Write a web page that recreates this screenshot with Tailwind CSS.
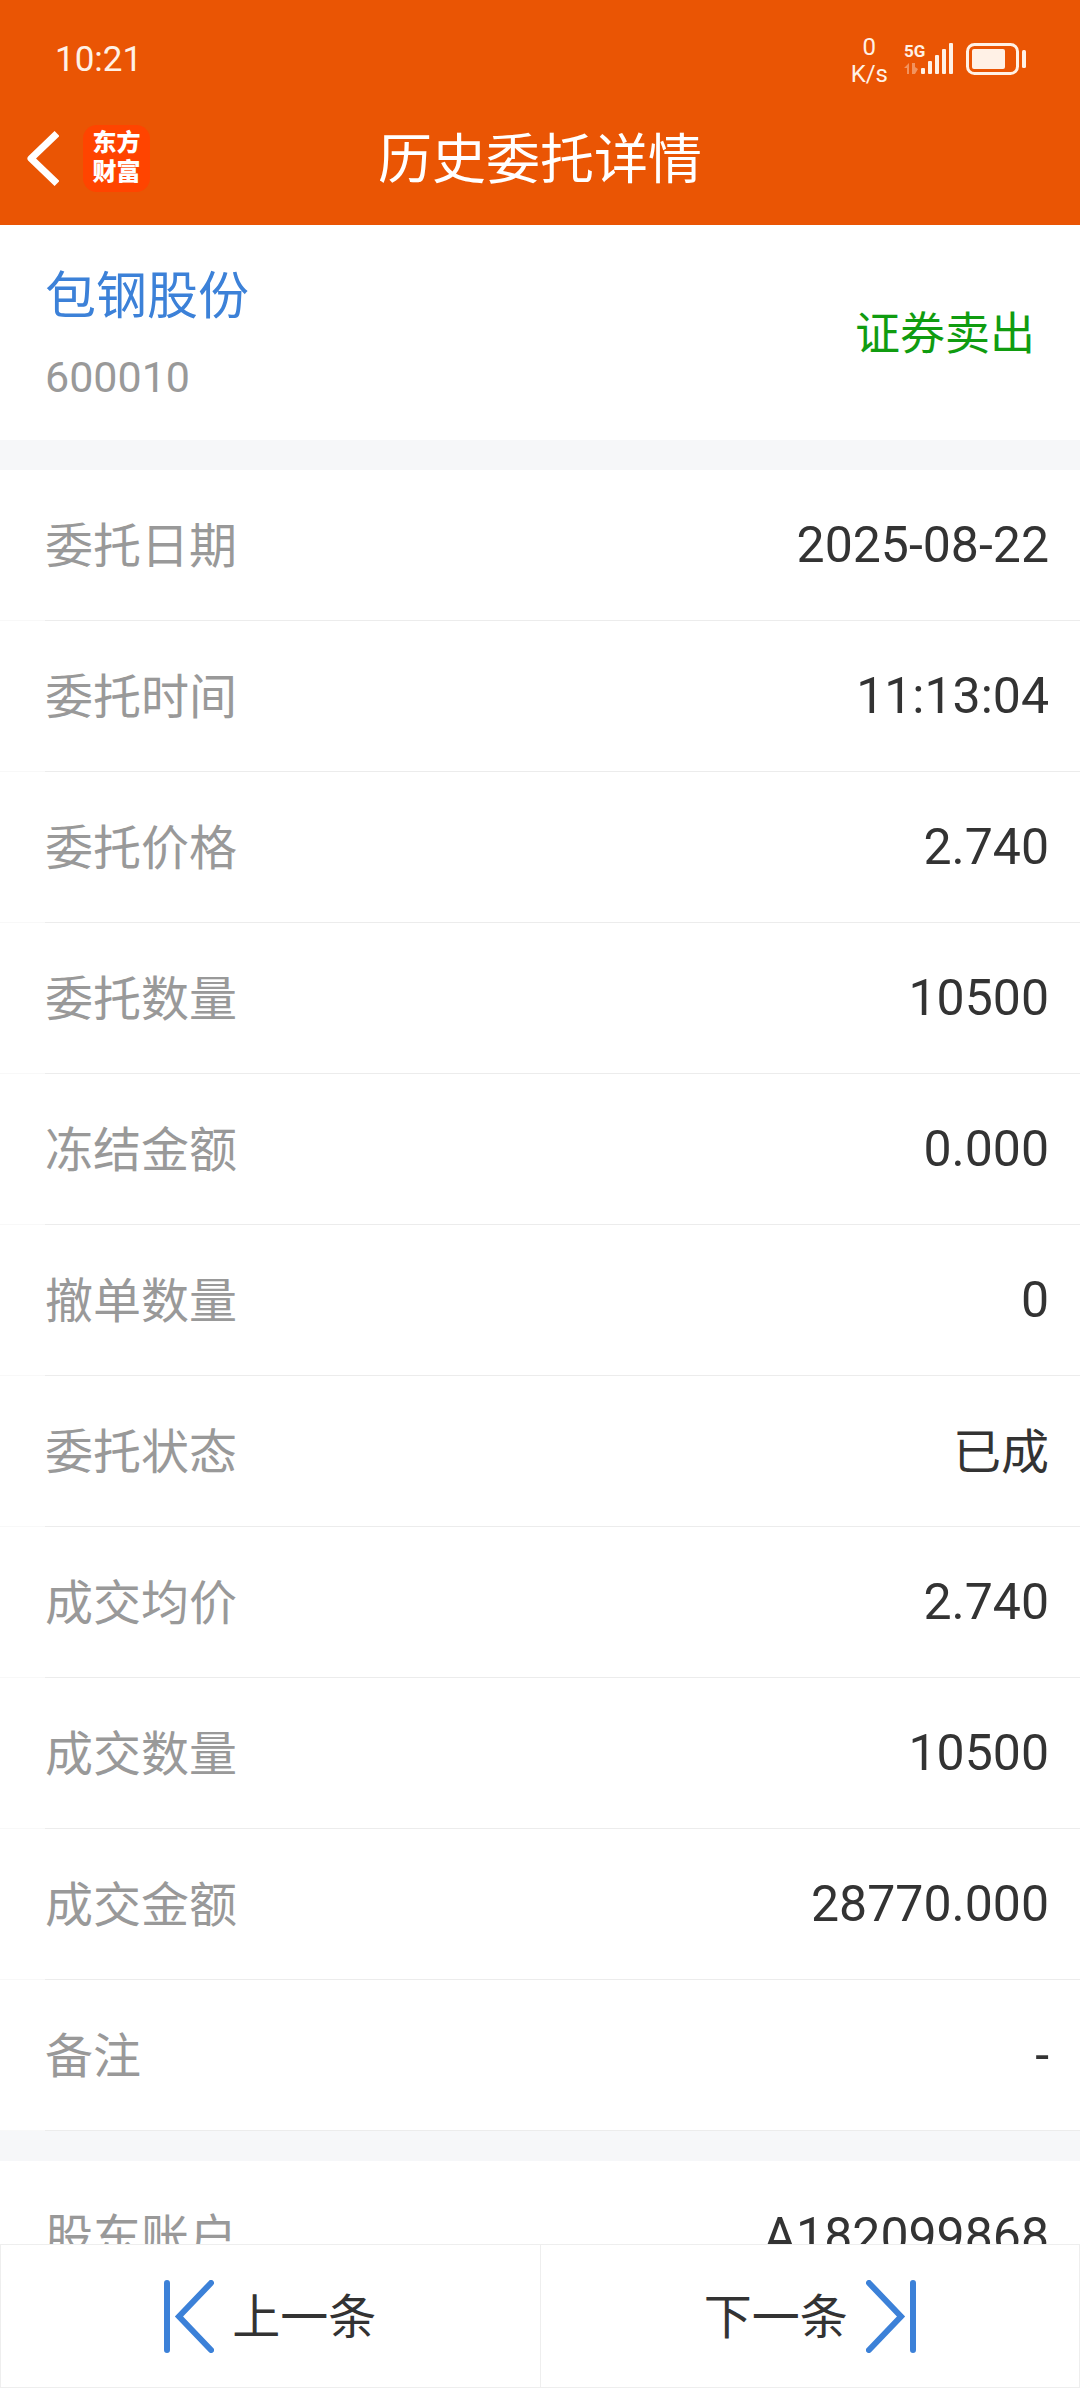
<!DOCTYPE html>
<html lang="zh-CN">
<head>
    <meta charset="UTF-8">
    <meta name="viewport" content="width=device-width, initial-scale=1.0">
    <title>历史委托详情</title>
    <script src="https://cdn.jsdelivr.net/npm/@tailwindcss/browser@4"></script>
</head>
<body class="h-screen flex flex-col bg-white text-[#333333] font-[Roboto,'Noto_Sans_CJK_SC',sans-serif]">
    <header class="shrink-0 bg-[#ea5504] text-white pt-5 pb-[7px]">
        <!-- 状态栏 -->
        <div class="h-[78px] pl-[55px] pr-[54px] flex items-center justify-between text-[#fff1e6]">
            <span class="text-[35px] leading-none">10:21</span>
            <div class="flex items-center">
                <div class="text-center text-[24px] leading-[27px] mr-4 pt-1">
                    <div>0</div>
                    <div>K/s</div>
                </div>
                <svg class="w-[50px] h-[34px]" viewBox="0 0 50 34" fill="currentColor">
                    <text x="0" y="15" font-size="17" font-weight="700">5G</text>
                    <path d="M5 21v11H3v-6H0z" opacity=".4"/>
                    <path d="M8 21h3v4l3 2-3 5H8z" opacity=".4"/>
                    <rect x="17" y="26" width="4" height="6" rx="1"/>
                    <rect x="24" y="19" width="4" height="13" rx="1"/>
                    <rect x="31" y="13" width="4" height="19" rx="1"/>
                    <rect x="38" y="7" width="4" height="25" rx="1"/>
                    <rect x="45" y="1" width="4" height="31" rx="1"/>
                </svg>
                <svg class="w-[60px] h-[34px] ml-3" viewBox="0 0 60 34" fill="currentColor">
                    <rect x="1.500" y="2.500" width="50" height="29" rx="7" fill="none" stroke="currentColor" stroke-width="3"/>
                    <rect x="6" y="7" width="33" height="20" rx="2"/>
                    <rect x="56" y="8" width="4" height="18" rx="1.500"/>
                </svg>
            </div>
        </div>
        <!-- 标题栏 -->
        <div class="h-[120px] px-[26px] grid grid-cols-[1fr_auto_1fr] items-center">
            <div class="flex items-center gap-6">
                <button type="button" aria-label="返回">
                    <svg class="w-[33px] h-[55px]" viewBox="0 0 33 55" fill="none" stroke="currentColor" stroke-width="7" stroke-linejoin="round">
                        <path d="M31 2.500L5 27.500l26 25"/>
                    </svg>
                </button>
                <div class="w-[67px] h-[67px] pb-1.5 rounded-[14px] bg-[#ff4400] flex flex-col items-center justify-center text-[24px] leading-[29px] font-black font-['Noto_Sans_CJK_SC',sans-serif]">
                    <span>东方</span>
                    <span>财富</span>
                </div>
            </div>
            <h1 class="text-[54px] leading-none pt-1.5">历史委托详情</h1>
        </div>
    </header>

    <main class="flex-1 min-h-0 overflow-y-auto [scrollbar-width:none]">
        <section class="h-[215px] px-[45px] flex items-center justify-between">
            <div class="pt-2">
                <a href="#" class="block text-[51px] leading-[80px] text-[#3c81d8]">包钢股份</a>
                <p class="text-[43px] leading-[80px] text-[#999999]">600010</p>
            </div>
            <p class="text-[45px] leading-none pt-1 text-[#109c10]">证券卖出</p>
        </section>
        <div class="h-[30px] bg-[#f6f7f9]"></div>
        <dl id="order"></dl>
        <div class="h-[30px] bg-[#f6f7f9]"></div>
        <dl id="account"></dl>
    </main>

    <footer class="shrink-0 h-36 flex border border-[#eeeeee] bg-white text-[48px] leading-none">
        <button type="button" class="flex-1 flex items-center justify-center gap-[18px] border-r border-[#eeeeee]">
            <svg class="w-[50px] h-[73px]" viewBox="0 0 50 73" fill="none" stroke="#3c81d8" stroke-width="6" stroke-linecap="round">
                <path d="M3 3v67M47 3L15 36.500l32 33.500"/>
            </svg>
            <span class="pt-1">上一条</span>
        </button>
        <button type="button" class="flex-1 flex items-center justify-center gap-[18px]">
            <span class="pt-1">下一条</span>
            <svg class="w-[50px] h-[73px]" viewBox="0 0 50 73" fill="none" stroke="#3c81d8" stroke-width="6" stroke-linecap="round">
                <path d="M47 3v67M3 3l32 33.500L3 70"/>
            </svg>
        </button>
    </footer>

    <script>
        const order = [
            ['委托日期', '2025-08-22'],
            ['委托时间', '11:13:04'],
            ['委托价格', '2.740'],
            ['委托数量', '10500'],
            ['冻结金额', '0.000'],
            ['撤单数量', '0'],
            ['委托状态', '已成'],
            ['成交均价', '2.740'],
            ['成交数量', '10500'],
            ['成交金额', '28770.000'],
            ['备注', '-'],
        ];
        const account = [
            ['股东账户', 'A182099868'],
        ];

        function render(id, rows) {
            document.getElementById(id).innerHTML = rows.map(([label, value]) => {
                // 中文的值与左侧标签同字号
                const size = /[\u4e00-\u9fa5]/.test(value) ? 'text-[48px] pt-1' : 'text-[50px]';
                return `
                <div>
                    <div class="h-[150px] pl-[45px] pr-[31px] flex items-center justify-between leading-none">
                        <dt class="text-[48px] pt-1 text-[#999999]">${label}</dt>
                        <dd class="${size}">${value}</dd>
                    </div>
                    <div class="h-px bg-[#f8f8f8] pl-[45px]"><div class="h-px bg-[#ececec]"></div></div>
                </div>`;
            }).join('');
        }

        render('order', order);
        render('account', account);
    </script>
</body>
</html>
